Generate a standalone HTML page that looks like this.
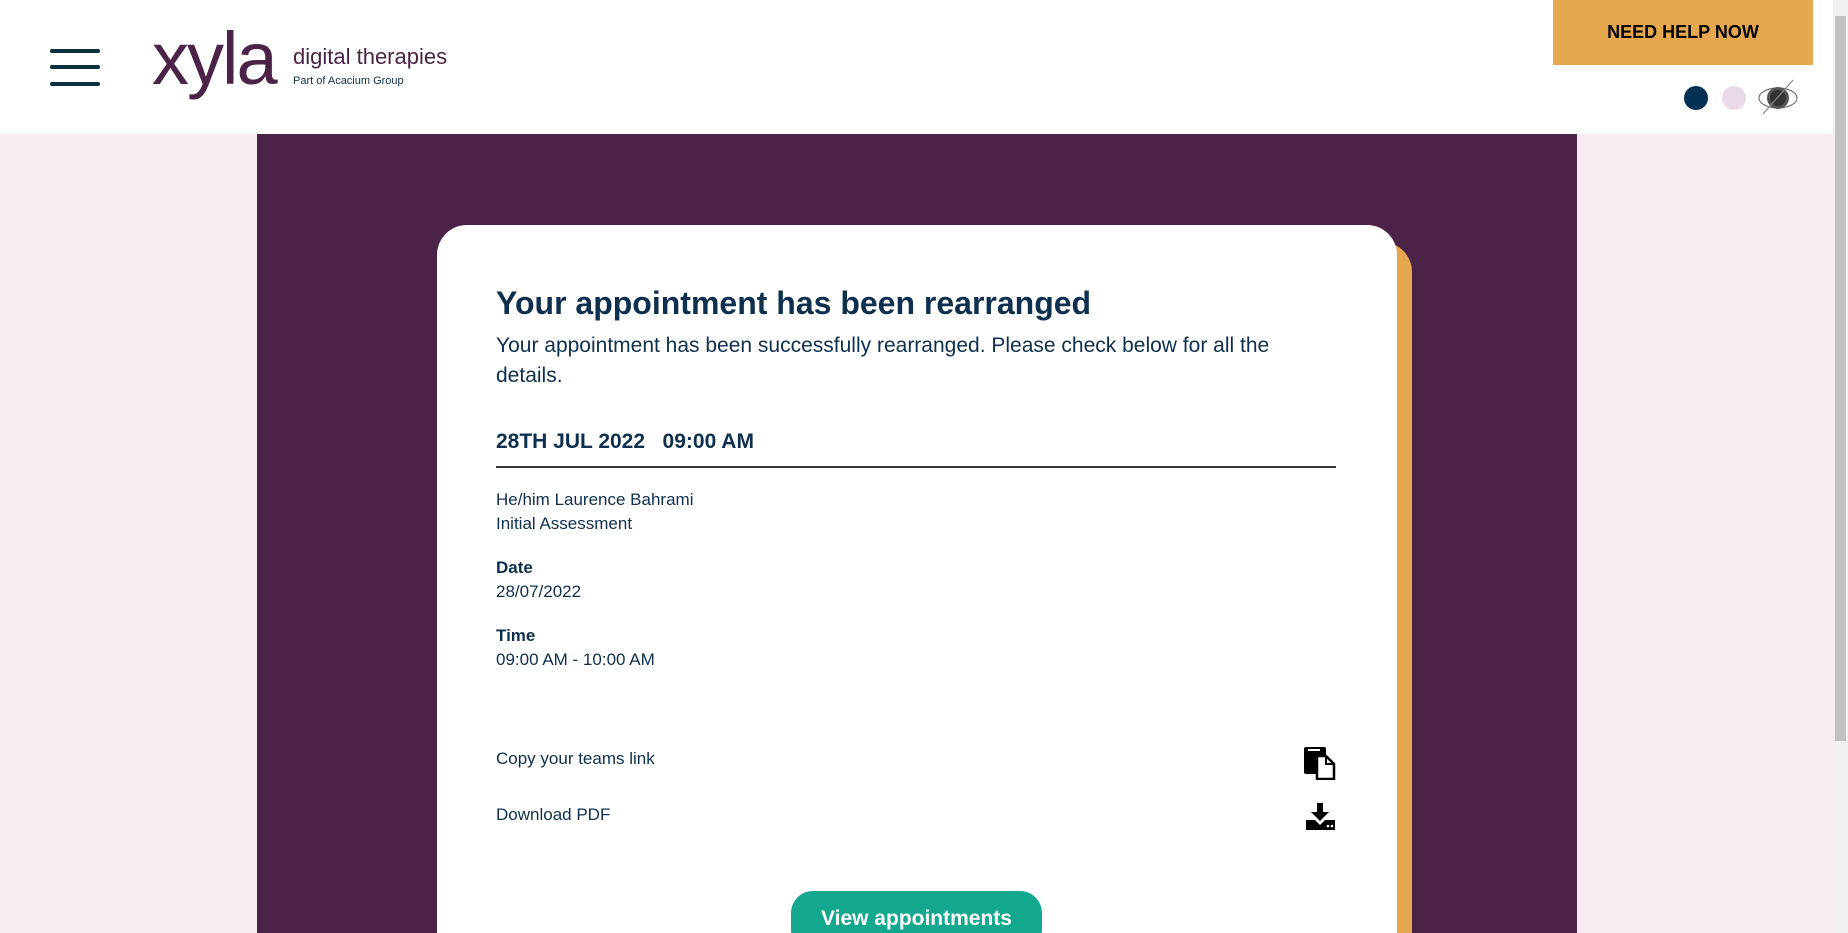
<!DOCTYPE html>
<html style="width:1848px;height:933px;overflow:hidden"><head><meta charset="utf-8"><style>
*{margin:0;padding:0;box-sizing:border-box}
body{width:1848px;height:933px;overflow:hidden;background:#f8edf3;font-family:"Liberation Sans",sans-serif;color:#0f2f4f;position:relative}
.hdr{position:absolute;left:0;top:0;width:1833px;height:134px;background:#fff}
.ham{position:absolute;left:50px;width:50px;height:4px;border-radius:2px;background:#0d2f3f}
.purple{position:absolute;left:257px;top:134px;width:1320px;height:799px;background:#4b2346}
.orange{position:absolute;left:437px;top:242px;width:975px;height:691px;background:#e5a84f;border-radius:30px 30px 0 0}
.card{position:absolute;left:437px;top:225px;width:960px;height:708px;background:#fff;border-radius:30px 30px 0 0}
.t{position:absolute;left:496px;white-space:nowrap}
.sb{position:absolute;left:1833px;top:0;width:15px;height:933px;background:#f1f1f1}
</style></head><body>
<div class="hdr">
<div class="ham" style="top:49px"></div><div class="ham" style="top:65px"></div><div class="ham" style="top:82px"></div>
<div style="position:absolute;left:152px;top:14px;font-size:74px;color:#4b2346;letter-spacing:-2px;line-height:90px">xyla</div>
<div style="position:absolute;left:293px;top:44px;font-size:22px;color:#4b2346">digital therapies</div>
<div style="position:absolute;left:293px;top:75px;font-size:11px;color:#0f2f4f">Part of Acacium Group</div>
<div style="position:absolute;left:1553px;top:0;width:260px;height:65px;background:#e5a84f;font-weight:bold;font-size:18px;color:#000;text-align:center;line-height:64px">NEED HELP NOW</div>
<div style="position:absolute;left:1684px;top:86px;width:24px;height:24px;border-radius:50%;background:#003153"></div>
<div style="position:absolute;left:1722px;top:86px;width:24px;height:24px;border-radius:50%;background:#ead9e7"></div>
<svg style="position:absolute;left:1757px;top:79px" width="42" height="36" viewBox="0 0 42 36"><ellipse cx="21" cy="19" rx="19" ry="10" fill="none" stroke="#777" stroke-width="1.2"/><circle cx="21" cy="19" r="11" fill="#555"/><circle cx="21" cy="19" r="8" fill="#333"/><line x1="36" y1="1" x2="6" y2="35" stroke="#888" stroke-width="1.2"/></svg>
</div>
<div class="purple"></div>
<div class="orange"></div>
<div class="card"></div>
<div class="t" style="top:285px;font-size:32px;font-weight:bold;color:#0f2f4f">Your appointment has been rearranged</div>
<div class="t" style="top:331px;font-size:21px;line-height:30px;white-space:normal;width:800px">Your appointment has been successfully rearranged. Please check below for all the details.</div>
<div class="t" style="top:430px;font-size:21px;font-weight:bold">28TH JUL 2022&nbsp;&nbsp;&nbsp;09:00 AM</div>
<div style="position:absolute;left:496px;top:466px;width:840px;height:1.5px;background:#333"></div>
<div class="t" style="top:488px;font-size:17px;line-height:24px">He/him Laurence Bahrami<br>Initial Assessment</div>
<div class="t" style="top:556px;font-size:17px;line-height:24px"><b>Date</b><br>28/07/2022</div>
<div class="t" style="top:624px;font-size:17px;line-height:24px"><b>Time</b><br>09:00 AM - 10:00 AM</div>
<div class="t" style="top:749px;font-size:17px">Copy your teams link</div>
<div class="t" style="top:805px;font-size:17px">Download PDF</div>
<svg style="position:absolute;left:1303px;top:746px" width="34" height="34" viewBox="0 0 34 34"><rect x="1" y="1" width="22" height="27" rx="2" fill="#000"/><rect x="5" y="3" width="12" height="2" fill="#fff"/><path d="M14 10h9l8 8v15H14z" fill="#fff" stroke="#000" stroke-width="2.5"/><path d="M23 10v8h8" fill="none" stroke="#000" stroke-width="2"/></svg>
<svg style="position:absolute;left:1305px;top:802px" width="32" height="30" viewBox="0 0 32 30"><path d="M12 1h6v9h6l-9 9-9-9h6z" fill="#000"/><path d="M1 18h9l5 5 5-5h10v10H1z" fill="#000"/><circle cx="23" cy="24" r="1.3" fill="#fff"/><circle cx="27" cy="24" r="1.3" fill="#fff"/></svg>
<div style="position:absolute;left:791px;top:891px;width:251px;height:42px;overflow:hidden"><div style="width:251px;height:60px;background:#13a88e;border-radius:22px;color:#fff;font-weight:bold;font-size:21px;text-align:center;line-height:56px">View appointments</div></div>
<div class="sb"><div style="position:absolute;left:2px;top:16px;width:11px;height:725px;background:#c1c1c1"></div></div>
</body></html>
